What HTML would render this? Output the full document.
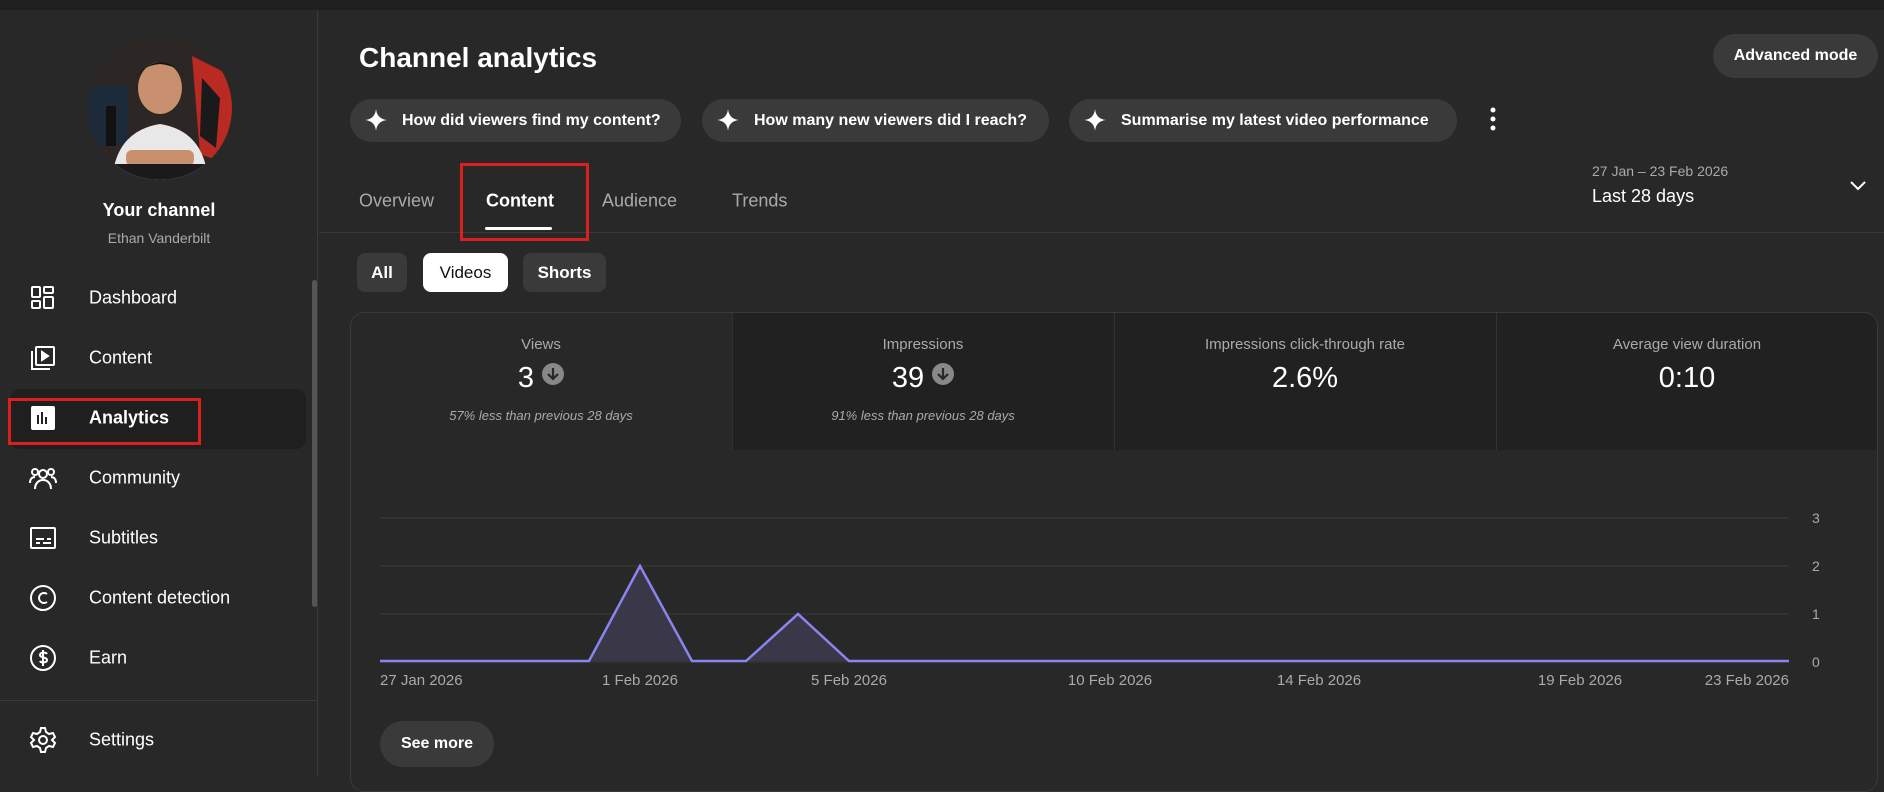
<!DOCTYPE html>
<html><head><meta charset="utf-8"><style>
*{box-sizing:border-box;margin:0;padding:0}
body{width:1884px;height:776px;background:#282828;font-family:"Liberation Sans",sans-serif;color:#fff;position:relative;overflow:hidden}
.a{position:absolute;white-space:nowrap}
.top{left:0;top:0;width:1884px;height:10px;background:#1f1f1f}
.side{left:0;top:10px;width:318px;height:766px;border-right:1px solid #3a3a3a}
.nav{left:89px;font-size:18px;transform:translateY(-50%)}
.ic{left:29px;width:28px;height:28px;transform:translateY(-50%)}
.chip{height:43px;top:99px;border-radius:22px;background:#3a3a3a;font-size:16px;display:flex;align-items:center;padding-left:52px;font-weight:bold}
.chip svg{position:absolute;left:15px;top:10px}
.tab{top:201px;font-size:18px;transform:translateY(-50%);color:#aaa}
.f{top:253px;height:39px;border-radius:8px;background:#3a3a3a;font-size:17px;font-weight:bold;display:flex;align-items:center;justify-content:center}
.lab{font-size:15px;color:#aaa;text-align:center;width:382px}
.val{font-size:29px;text-align:center;width:382px}
.sub{font-size:13px;color:#aaa;font-style:italic;text-align:center;width:382px}
.xl{top:672px;font-size:15px;color:#aaa}
.yl{left:1812px;font-size:14px;color:#aaa}
</style></head><body>
<div class="a top"></div>
<div class="a side"></div>
<svg class="a" style="left:88px;top:36px" width="144" height="144"><defs><clipPath id="c"><circle cx="72" cy="72" r="72"/></clipPath></defs><g clip-path="url(#c)"><rect width="144" height="144" fill="#3a3230"/><rect x="0" y="0" width="144" height="144" fill="#1e1a18" opacity=".5"/><rect x="0" y="50" width="40" height="60" fill="#1d2a3a"/><path d="M104 20 L144 40 L144 130 L112 118 Z" fill="#b82a22"/><path d="M114 42 L132 62 L128 112 L112 100Z" fill="#1a1a1a"/><rect x="18" y="70" width="10" height="40" fill="#111"/><ellipse cx="72" cy="52" rx="22" ry="26" fill="#c9906f"/><path d="M50 40 Q72 12 96 40 Q90 30 72 28 Q54 30 50 40Z" fill="#1a1410"/><path d="M24 144 Q28 95 72 88 Q116 95 120 144Z" fill="#e8e8e8"/><rect x="38" y="114" width="68" height="16" rx="6" fill="#c9906f"/><rect x="0" y="128" width="144" height="16" fill="#1a1a1a"/></g></svg>
<div class="a" style="left:0;width:318px;top:200px;text-align:center;font-size:18px;font-weight:bold">Your channel</div>
<div class="a" style="left:0;width:318px;top:230px;text-align:center;font-size:14px;color:#aaa">Ethan Vanderbilt</div>
<div class="a" style="left:312px;top:280px;width:5px;height:327px;background:#555;border-radius:3px"></div>
<div class="a" style="left:10px;top:389px;width:296px;height:60px;background:#1f1f1f;border-radius:10px"></div>
<div class="a" style="left:8px;top:398px;width:193px;height:47px;border:3px solid #d9201f"></div>
<svg class="a ic" style="top:298px" viewBox="0 0 28 28" fill="none" stroke="#fff" stroke-width="2"><rect x="3" y="3" width="8" height="10" rx="1"/><rect x="15" y="3" width="9" height="6" rx="1"/><rect x="3" y="17" width="8" height="7" rx="1"/><rect x="15" y="13" width="9" height="11" rx="1"/></svg>
<div class="a nav" style="top:298px">Dashboard</div>
<svg class="a ic" style="top:358px" viewBox="0 0 28 28" fill="none" stroke="#fff" stroke-width="2"><rect x="7" y="3" width="18" height="18" rx="1"/><path d="M3 7v18h18"/><path d="M13 8l6 4-6 4z" fill="#fff"/></svg>
<div class="a nav" style="top:358px">Content</div>
<svg class="a ic" style="top:418px" viewBox="0 0 28 28"><rect x="2" y="2" width="24" height="24" rx="2" fill="#fff"/><path d="M9 11v9M13 8v12M17 13v7" stroke="#222" stroke-width="2"/></svg>
<div class="a nav" style="top:418px;font-weight:bold">Analytics</div>
<svg class="a ic" style="top:478px" viewBox="0 0 28 28" fill="none" stroke="#fff" stroke-width="2"><circle cx="14" cy="10" r="4"/><path d="M6 25c0-6 4-9 8-9s8 3 8 9"/><circle cx="6" cy="8" r="3"/><circle cx="22" cy="8" r="3"/><path d="M1 19c0-4 2-6 5-6M27 19c0-4-2-6-5-6"/></svg>
<div class="a nav" style="top:478px">Community</div>
<svg class="a ic" style="top:538px" viewBox="0 0 28 28" fill="none" stroke="#fff" stroke-width="2"><rect x="2" y="4" width="24" height="20" rx="1"/><path d="M7 15h8M18 15h4M7 19h4M14 19h8"/></svg>
<div class="a nav" style="top:538px">Subtitles</div>
<svg class="a ic" style="top:598px" viewBox="0 0 28 28" fill="none" stroke="#fff" stroke-width="2"><circle cx="14" cy="14" r="12"/><path d="M18 10a5 5 0 1 0 0 8"/></svg>
<div class="a nav" style="top:598px">Content detection</div>
<svg class="a ic" style="top:658px" viewBox="0 0 28 28" fill="none" stroke="#fff" stroke-width="2"><circle cx="14" cy="14" r="12"/><path d="M18 10c-1-2-7-2-7 1s7 2 7 5-6 3-7 1M14 6v16"/></svg>
<div class="a nav" style="top:658px">Earn</div>
<div class="a" style="left:0;top:700px;width:318px;height:1px;background:#3a3a3a"></div>
<svg class="a ic" style="top:740px" viewBox="0 0 28 28" fill="none" stroke="#fff" stroke-width="2"><circle cx="14" cy="14" r="4"/><path d="M12 2h4l1 4 3 2 4-1 2 4-3 3v0l3 3-2 4-4-1-3 2-1 4h-4l-1-4-3-2-4 1-2-4 3-3-3-3 2-4 4 1 3-2z"/></svg>
<div class="a nav" style="top:740px">Settings</div>

<div class="a" style="left:359px;top:42px;font-size:28px;font-weight:bold">Channel analytics</div>
<div class="a" style="left:1713px;top:34px;width:165px;height:44px;border-radius:22px;background:#3a3a3a;font-size:16px;font-weight:bold;display:flex;align-items:center;justify-content:center">Advanced mode</div>
<div class="a chip" style="left:350px;width:331px">How did viewers find my content?<svg width="22" height="22" viewBox="0 0 22 22"><path d="M11 0Q12 10 22 11Q12 12 11 22Q10 12 0 11Q10 10 11 0Z" fill="#fff"/></svg></div>
<div class="a chip" style="left:702px;width:347px">How many new viewers did I reach?<svg width="22" height="22" viewBox="0 0 22 22"><path d="M11 0Q12 10 22 11Q12 12 11 22Q10 12 0 11Q10 10 11 0Z" fill="#fff"/></svg></div>
<div class="a chip" style="left:1069px;width:388px">Summarise my latest video performance<svg width="22" height="22" viewBox="0 0 22 22"><path d="M11 0Q12 10 22 11Q12 12 11 22Q10 12 0 11Q10 10 11 0Z" fill="#fff"/></svg></div>
<svg class="a" style="left:1487px;top:106px" width="12" height="28"><circle cx="6" cy="4" r="2.5" fill="#fff"/><circle cx="6" cy="13" r="2.5" fill="#fff"/><circle cx="6" cy="22" r="2.5" fill="#fff"/></svg>

<div class="a tab" style="left:359px">Overview</div>
<div class="a tab" style="left:486px;color:#fff;font-weight:bold">Content</div>
<div class="a tab" style="left:602px">Audience</div>
<div class="a tab" style="left:732px">Trends</div>
<div class="a" style="left:485px;top:227px;width:67px;height:3px;background:#fff;border-radius:2px"></div>
<div class="a" style="left:319px;top:232px;width:1565px;height:1px;background:#3a3a3a"></div>
<div class="a" style="left:460px;top:163px;width:129px;height:78px;border:3px solid #d9201f"></div>
<div class="a" style="left:1592px;top:163px;font-size:14px;color:#aaa">27 Jan – 23 Feb 2026</div>
<div class="a" style="left:1592px;top:186px;font-size:18px">Last 28 days</div>
<svg class="a" style="left:1849px;top:180px" width="18" height="12"><path d="M2 2l7 7 7-7" fill="none" stroke="#fff" stroke-width="2"/></svg>

<div class="a f" style="left:357px;width:50px">All</div>
<div class="a f" style="left:423px;width:85px;background:#fff;color:#0f0f0f;font-weight:normal">Videos</div>
<div class="a f" style="left:523px;width:83px">Shorts</div>

<div class="a" style="left:350px;top:312px;width:1528px;height:480px;border:1px solid #3a3a3a;border-radius:14px;overflow:hidden">
 <div class="a" style="left:381px;top:0;width:1147px;height:137px;background:#212121"></div>
 <div class="a" style="left:381px;top:0;width:1px;height:137px;background:#333"></div>
 <div class="a" style="left:763px;top:0;width:1px;height:137px;background:#333"></div>
 <div class="a" style="left:1145px;top:0;width:1px;height:137px;background:#333"></div>
</div>
<div class="a lab" style="left:350px;top:336px">Views</div>
<div class="a val" style="left:350px;top:362px">3 <svg width="22" height="22" style="vertical-align:2px"><circle cx="11" cy="11" r="11" fill="#888"/><path d="M11 5v11M6 11l5 5 5-5" stroke="#282828" stroke-width="2.2" fill="none"/></svg></div>
<div class="a sub" style="left:350px;top:408px">57% less than previous 28 days</div>
<div class="a lab" style="left:732px;top:336px">Impressions</div>
<div class="a val" style="left:732px;top:362px">39 <svg width="22" height="22" style="vertical-align:2px"><circle cx="11" cy="11" r="11" fill="#888"/><path d="M11 5v11M6 11l5 5 5-5" stroke="#282828" stroke-width="2.2" fill="none"/></svg></div>
<div class="a sub" style="left:732px;top:408px">91% less than previous 28 days</div>
<div class="a lab" style="left:1114px;top:336px">Impressions click-through rate</div>
<div class="a val" style="left:1114px;top:362px">2.6%</div>
<div class="a lab" style="left:1496px;top:336px">Average view duration</div>
<div class="a val" style="left:1496px;top:362px">0:10</div>

<svg class="a" style="left:0;top:0" width="1884" height="776">
<g stroke="#3d3d3d" stroke-width="1"><line x1="380" y1="518" x2="1789" y2="518"/><line x1="380" y1="566" x2="1789" y2="566"/><line x1="380" y1="614" x2="1789" y2="614"/><line x1="380" y1="662" x2="1789" y2="662"/></g>
<path d="M589 661L640 566L692 661ZM746 661L798 614L849 661Z" fill="#3a3848"/>
<polyline points="380,661 589,661 640,566 692,661 746,661 798,614 849,661 1789,661" fill="none" stroke="#8a84f0" stroke-width="2.5"/>
</svg>
<div class="a yl" style="top:510px">3</div>
<div class="a yl" style="top:558px">2</div>
<div class="a yl" style="top:606px">1</div>
<div class="a yl" style="top:654px">0</div>
<div class="a xl" style="left:380px">27 Jan 2026</div>
<div class="a xl" style="left:640px;transform:translateX(-50%)">1 Feb 2026</div>
<div class="a xl" style="left:849px;transform:translateX(-50%)">5 Feb 2026</div>
<div class="a xl" style="left:1110px;transform:translateX(-50%)">10 Feb 2026</div>
<div class="a xl" style="left:1319px;transform:translateX(-50%)">14 Feb 2026</div>
<div class="a xl" style="left:1580px;transform:translateX(-50%)">19 Feb 2026</div>
<div class="a xl" style="left:1789px;transform:translateX(-100%)">23 Feb 2026</div>
<div class="a" style="left:380px;top:721px;width:114px;height:46px;border-radius:23px;background:#3a3a3a;font-size:16px;font-weight:bold;display:flex;align-items:center;justify-content:center">See more</div>
</body></html>
